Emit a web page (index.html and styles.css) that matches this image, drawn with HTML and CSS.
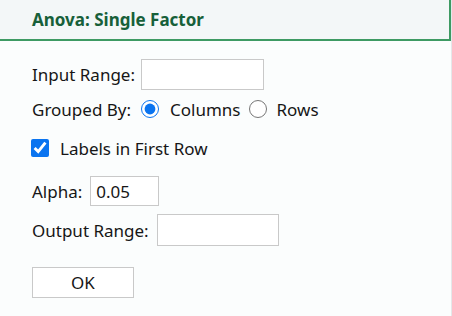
FILE: index.html
```html
<!DOCTYPE html>
<html lang="en">
<head>
    <meta charset="UTF-8">
    <meta name="viewport" content="width=device-width, initial-scale=1.0">
    <title>Anova: Single Factor</title>
    <link rel="stylesheet" href="styles.css">
</head>
<body>
    <div class="dialog">
        <div class="dialog-header">
            <h1>Anova: Single Factor</h1>
        </div>
        <form class="dialog-body">
            <div class="row row-input">
                <label for="inputRange">Input Range:</label>
                <input type="text" id="inputRange" class="range-box">
            </div>
            <div class="row row-group">
                <span class="row-label">Grouped By:</span>
                <label class="option"><input type="radio" name="group" checked>Columns</label>
                <label class="option"><input type="radio" name="group">Rows</label>
            </div>
            <div class="row row-check">
                <label class="option"><input type="checkbox" checked>Labels in First Row</label>
            </div>
            <div class="row row-alpha">
                <label for="alpha">Alpha:</label>
                <input type="text" id="alpha" class="alpha-box" value="0.05">
            </div>
            <div class="row row-output">
                <label for="outputRange">Output Range:</label>
                <input type="text" id="outputRange" class="range-box">
            </div>
            <button type="button" class="ok-button">OK</button>
        </form>
    </div>
</body>
</html>
```

FILE: styles.css
```css
body {
    font-family: "Noto Sans", "Open Sans", sans-serif;
    font-size: 17px;
    color: #161616;
    background-color: #fbfdfd;
    margin: 0;
    padding: 0;
}

.dialog {
    width: 452px;
    height: 316px;
    border-right: 1px solid #e4e8ea;
    box-sizing: border-box;
}

.dialog-header {
    height: 41px;
    width: 451px;
    background-color: #f3f7f8;
    border-bottom: 2px solid #3d9a63;
    border-right: 2px solid #3d9a63;
    box-sizing: border-box;
    padding-left: 32px;
    display: flex;
    align-items: center;
}

.dialog-header h1 {
    margin: 0;
    font-size: 17px;
    font-weight: 700;
    color: #17603a;
}

.dialog-body {
    padding: 18px 0 0 32px;
    display: flex;
    flex-direction: column;
    align-items: flex-start;
}

.row {
    display: flex;
    align-items: center;
}

.row input[type="text"] {
    height: 31px;
    box-sizing: border-box;
    border: 1px solid #c9c9c9;
    background-color: #ffffff;
    font-family: inherit;
    font-size: 17px;
    color: #161616;
    padding: 0 5px;
    margin: 0;
    outline: none;
}

.row-input label {
    margin-right: 6px;
}

.range-box {
    width: 123px;
}

.row-group {
    margin-top: 9px;
    height: 20px;
}

.option {
    display: flex;
    align-items: center;
}

.option input {
    width: 18px;
    height: 18px;
    margin: 0 11px 0 0;
    accent-color: #0a74f0;
}

.row-group .row-label {
    margin-right: 10px;
}

.row-group .option + .option {
    margin-left: 8px;
}

.row-group .option + .option input {
    margin-right: 10px;
}

.row-check {
    margin-top: 19px;
    height: 20px;
}

.row-check .option input {
    margin-left: -1px;
    margin-right: 11px;
}

.row-alpha {
    margin-top: 18px;
}

.row-alpha label {
    margin-right: 8px;
}

.alpha-box {
    width: 69px;
    height: 30px !important;
}

.row-output {
    margin-top: 8px;
}

.row-output label {
    margin-right: 8px;
}

.row-output .range-box {
    width: 122px;
    height: 32px !important;
}

.ok-button {
    margin-top: 21px;
    width: 102px;
    height: 31px;
    background-color: #ffffff;
    border: 1px solid #c9c9c9;
    font-family: inherit;
    font-size: 17px;
    color: #161616;
    cursor: pointer;
}
```
